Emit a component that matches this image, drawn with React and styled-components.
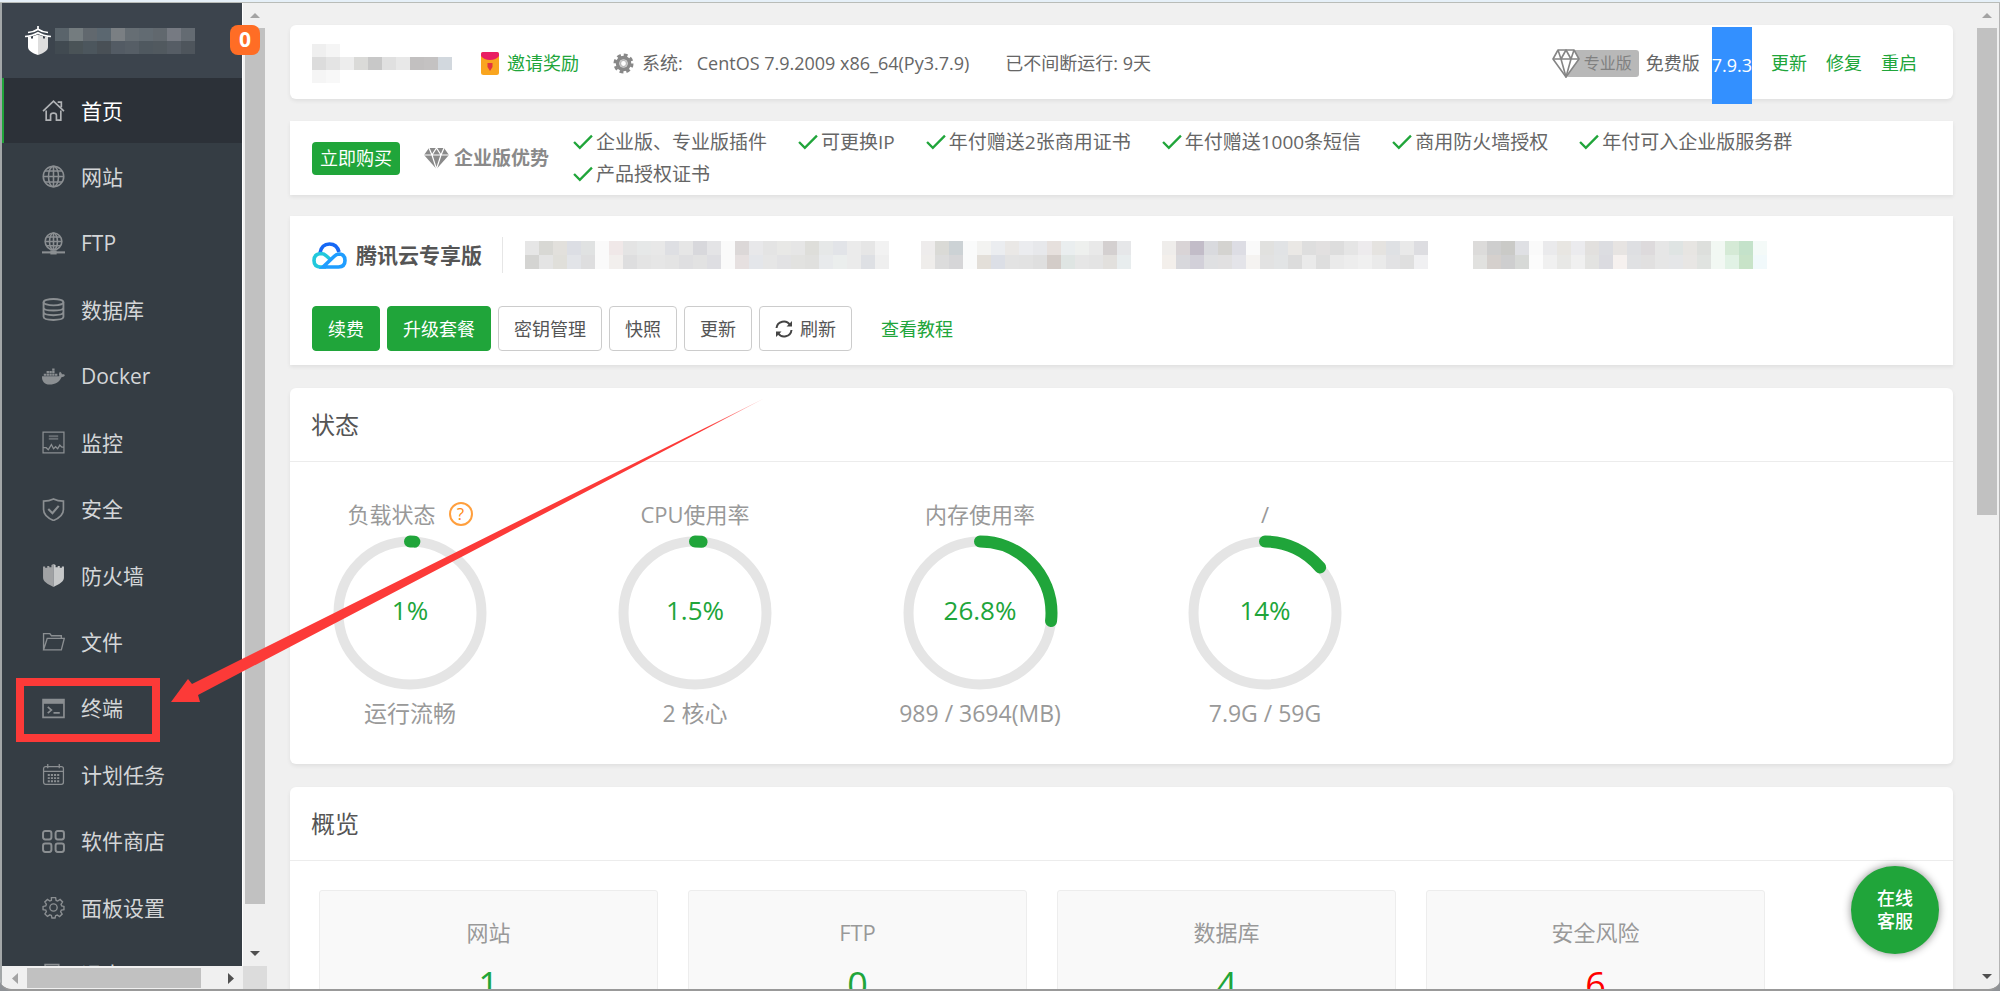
import React from 'react'
import styled, { createGlobalStyle, css } from 'styled-components'
import { FaDocker } from 'react-icons/fa'

const GlobalStyle = createGlobalStyle`
* { box-sizing: border-box; }
body {
  margin: 0;
  background: #8f9296;
  color: #666;
  font-family: "Open Sans", "Noto Sans CJK SC", sans-serif;
  font-size: 18px;
  line-height: 24px;
}
ul { list-style: none; margin: 0; padding: 0; }
h2, p { margin: 0; font-weight: normal; }
a { text-decoration: none; color: #20a53a; }
button { font-family: inherit; }
svg { display: block; flex: none; }
`

const Window = styled.div`
display: flex;
flex-direction: column;
position: relative;
height: 100vh;
overflow: hidden;
background: #f0f0f0;
border-radius: 0 0 12px 12px;
border-bottom: 2px solid #999;
`

const TopEdge = styled.div`
flex: none;
height: 3px;
background: #e6f0f8;
border-bottom: 1px solid #b9bcb8;
`

const Body = styled.div`
display: flex;
flex: 1;
min-height: 0;
border-left: 2px solid #a3a7a8;
border-right: 1px solid #b4b4b4;
`

const SidePane = styled.aside`
flex: none;
display: grid;
grid-template-columns: 241px 24px;
grid-template-rows: minmax(0, 1fr) 23px;
`

const Sidebar = styled.div`
display: flex;
flex-direction: column;
min-height: 0;
background: #353d44;
border-right: 1px solid #fff;
`

const SideHead = styled.div`
display: flex;
align-items: center;
position: relative;
flex: none;
height: 75px;
padding: 0 0 0 23px;
background: #3c444d;
`

const Badge = styled.span`
position: absolute;
top: 22px;
right: -18px;
width: 30px;
height: 30px;
border-radius: 8px;
background: #ff6d25;
color: #fff;
font-size: 21px;
font-weight: bold;
line-height: 28px;
text-align: center;
z-index: 2;
`

const Nav = styled.nav`
flex: 1;
min-height: 0;
overflow: hidden;
`

const Menu = styled.ul`
display: grid;
grid-auto-rows: 1fr;
height: 930px;
`

const MenuLink = styled.a`
display: flex;
align-items: center;
gap: 16px;
height: 65px;
padding-left: 38px;
border-left: 2px solid transparent;
color: #d4d6d8;
font-size: 21px;
line-height: 30px;

svg { width: 23px; height: 23px; color: #8b8f92; }

${p => p.$active && css`
  background: #2c3138;
  border-left-color: #20a53a;
  color: #fff;
  svg { color: #b0b2b5; }
`}
`

const Corner = styled.div`
background: #dcdcdc;
`

const Bar = styled.div`
display: flex;
flex: none;
flex-direction: ${p => (p.$row ? 'row' : 'column')};
${p => (p.$row ? 'height: 23px; padding: 2px 0 1px;' : 'width: 24px; padding: 0 2px;')}
background: #f0f0f0;
`

const BarEnd = styled.div`
display: flex;
align-items: center;
justify-content: center;
flex: none;
${p => (p.$row ? 'width: 25px;' : 'height: 25px;')}
`

const Track = styled.div`
flex: 1;
min-height: 0;
`

const Thumb = styled.div`
background: #c1c1c1;
${p => (p.$row ? `height: 100%; width: ${p.$size}%;` : `width: 100%; height: ${p.$size}%;`)}
`

const Main = styled.main`
flex: 1;
min-width: 0;
overflow: hidden;
padding: 22px 22px 0 23px;
`

const Card = styled.section`
background: #fff;
border-radius: ${p => (p.$square ? '0' : '6px')};
box-shadow: 0 2px 4px rgba(0, 0, 0, .07);
`

const InfoCard = styled(Card)`
display: flex;
align-items: center;
height: 74px;
padding: 2px 36px 0 22px;
margin-bottom: 22px;
white-space: nowrap;
`

const Invite = styled.a`
display: flex;
align-items: center;
gap: 8px;
margin-left: 29px;
`

const System = styled.div`
display: flex;
align-items: center;
gap: 8px;
margin: 0 36px 0 34px;
`

const SystemName = styled.span`
margin-left: 6px;
`

const Version = styled.div`
display: flex;
align-items: center;
margin-left: auto;

> svg { position: relative; z-index: 1; }
`

const ProTag = styled.span`
height: 27px;
margin-left: -14px;
padding: 0 7px 0 18px;
border-radius: 3px;
background: #b8b8b8;
color: #808080;
font-size: 16px;
line-height: 26px;
`

const Plan = styled.span`
margin: 0 12px 0 7px;
`

const Selected = styled.span`
height: 77px;
margin-bottom: -5px;
background: #3390ff;
color: #fff;
line-height: 77px;
`

const VersionLink = styled.a`
margin-left: 19px;
`

const PlanCard = styled(Card)`
display: flex;
align-items: center;
min-height: 74px;
padding: 0 22px;
margin-bottom: 21px;
`

const BuyButton = styled.button`
flex: none;
height: 33px;
padding: 0 8px;
border: 0;
border-radius: 4px;
background: #20a53a;
color: #fff;
font-size: 18px;
line-height: 30px;
`

const Brand = styled.div`
display: flex;
align-items: center;
flex: none;
gap: 5px;
margin: 0 24px;
color: #8a8a8a;
font-size: 19px;
font-weight: bold;
`

const Perks = styled.ul`
display: flex;
flex-wrap: wrap;
column-gap: 31px;
`

const Perk = styled.li`
display: flex;
align-items: center;
gap: 3px;
height: 32px;
font-size: 19px;
`

const CloudCard = styled(Card)`
height: 149px;
padding: 21px 22px 0;
margin-bottom: 23px;
`

const CloudRow = styled.div`
display: flex;
align-items: center;
height: 36px;
`

const CloudName = styled.strong`
margin-left: 9px;
padding-right: 20px;
border-right: 1px solid #e6e6e6;
color: #555;
font-size: 21px;
line-height: 36px;
`

const ButtonRow = styled.div`
display: flex;
align-items: center;
gap: 7px;
margin-top: 33px;
`

const CloudButton = styled.button`
display: flex;
align-items: center;
gap: 7px;
height: 45px;
padding: 0 15px;
border: 1px solid ${p => (p.$primary ? '#20a53a' : '#ccc')};
border-radius: 4px;
background: ${p => (p.$primary ? '#20a53a' : '#fff')};
color: ${p => (p.$primary ? '#fff' : '#555')};
font-size: 18px;
line-height: 24px;
`

const Guide = styled.a`
margin-left: 22px;
`

const Panel = styled(Card)`
margin-bottom: 23px;
`

const PanelTitle = styled.h2`
height: 74px;
padding-left: 21px;
border-bottom: 1px solid #ececec;
color: #555;
font-size: 24px;
line-height: 73px;
`

const Gauges = styled.div`
display: flex;
gap: 45px;
padding: 37px 0 36px;
`

const GaugeBox = styled.div`
display: flex;
flex-direction: column;
align-items: center;
width: 240px;
color: #999;
font-size: 22px;
line-height: 30px;
`

const GaugeLabel = styled.div`
display: flex;
align-items: center;
gap: 13px;
`

const Help = styled.button`
width: 24px;
height: 24px;
padding: 0;
border: 2px solid #ff9f3d;
border-radius: 50%;
background: none;
color: #ff8a15;
font-size: 17px;
line-height: 20px;
`

const Dial = styled.div`
display: grid;
place-items: center;
margin: 4px 0 5px;

> * { grid-area: 1 / 1; }
`

const DialValue = styled.span`
color: #20a53a;
font-size: 26px;
line-height: 36px;
padding-bottom: 6px;
`

const GaugeNote = styled.p`
font-size: 23px;
`

const Tiles = styled.div`
display: grid;
grid-template-columns: repeat(4, minmax(0, 339px));
gap: 30px;
padding: 29px;
`

const Tile = styled.div`
height: 150px;
padding-top: 26px;
border: 1px solid #ededed;
border-radius: 3px;
background: #f9f9f9;
color: #999;
font-size: 22px;
line-height: 30px;
text-align: center;
`

const TileCount = styled.a`
display: block;
margin-top: 14px;
color: ${p => (p.$alert ? 'red' : '#20a53a')};
font-size: 36px;
line-height: 48px;
`

const ServiceButton = styled.button`
position: absolute;
right: 61px;
bottom: 35px;
width: 88px;
height: 88px;
padding: 0 24px;
border: 0;
border-radius: 50%;
background: #20a53a;
box-shadow: 0 0 8px rgba(0, 0, 0, .45);
color: #fff;
font-size: 18px;
font-weight: 500;
line-height: 23px;
`

const Highlight = styled.div`
position: absolute;
left: 16px;
top: 678px;
width: 144px;
height: 64px;
border: 8px solid #fc3a38;
pointer-events: none;
`

const Arrow = styled.svg`
position: absolute;
left: 0;
top: 0;
pointer-events: none;
`

const MosaicGrid = styled.div`
display: grid;
grid-template-columns: repeat(${p => p.$cols}, ${p => p.$w}px);
grid-auto-rows: ${p => p.$h}px;
margin-left: ${p => p.$left || 0}px;
`

const Pixel = styled.i`
background: ${p => p.$color};
`

// rows: strings of space separated hex colours
const Mosaic = ({ rows, w, h, left }) => (
  <MosaicGrid $cols={rows[0].split(' ').length} $w={w} $h={h} $left={left} aria-hidden="true">
    {rows.join(' ').split(' ').map((c, i) => <Pixel key={i} $color={c === '-' ? 'transparent' : '#' + c} />)}
  </MosaicGrid>
)

const Line = ({ children, w = 1.5 }) => (
  <svg viewBox="0 0 22 22" fill="none" stroke="currentColor" strokeWidth={w}>{children}</svg>
)

const TowerLogo = () => (
  <svg width="26" height="29" viewBox="0 0 26 29">
    <path d="M13 0v4M3 6.500Q9 6 13 3.200Q17 6 23 6.500M0 10.500Q8 10 13 6.800Q18 10 26 10.500" fill="none" stroke="#fff" strokeWidth="1.700" />
    <path d="M3 11l3-.4v2h2v-2.400l3-1 2-.8V29C7 27 3 24.500 3 21z" fill="#fff" />
    <path d="M23 11l-3-.4v2h-2v-2.400l-3-1-2-.8V29c6-2 10-4.500 10-8z" fill="#ddd" />
  </svg>
)

const HomeIcon = () => (
  <Line w={1.6}>
    <path d="M1 11.500L11 2l10 9.500M15 3h3.500v5M4 11v9.200h4.200v-4.700q0-2 2.800-2t2.800 2v4.700H18V11" />
  </Line>
)
const GlobeIcon = () => (
  <Line>
    <circle cx="11" cy="11" r="9.800" />
    <ellipse cx="11" cy="11" rx="4.800" ry="9.800" />
    <path d="M11 1v20M1 11h20M3 5.800h16M3 16.200h16" />
  </Line>
)
const FtpIcon = () => (
  <Line>
    <circle cx="11" cy="9" r="8" />
    <ellipse cx="11" cy="9" rx="3.800" ry="8" />
    <path d="M11 1v16M3 9h16M4.500 4.800h13M4.500 13.200h13" />
    <path d="M0 19.500h22" strokeWidth="2" />
    <path d="M8 19.500h6" strokeWidth="4" />
  </Line>
)
const DatabaseIcon = () => (
  <Line w={1.8}>
    <ellipse cx="11" cy="4" rx="9.500" ry="3" />
    <path d="M1.500 4v14c0 4 19 4 19 0V4M1.500 9c0 4 19 4 19 0M1.500 13.500c0 4 19 4 19 0" />
  </Line>
)
const MonitorIcon = () => (
  <Line w={1.2}>
    <path d="M1 1h20v20H1z" />
    <path d="M6.500 5h9M6.500 7.500h9" strokeWidth="1.800" opacity=".6" />
    <path d="M1 16h3l2 2 3-5 2 4 2-2 2 2 2-3.500 2 2h2" />
  </Line>
)
const SafeIcon = () => (
  <Line w={1.6}>
    <path d="M11 1Q15 3 20.500 3v8q0 6.500-9.500 10.500Q1.500 17.500 1.500 11V3Q7 3 11 1z" />
    <path d="M6 10.500l4 4 6-7" strokeWidth="2" />
  </Line>
)
const WallIcon = () => (
  <svg viewBox="0 0 22 22">
    <path d="M1 2.500h2v1h2V2h2v1h2V1L11 0v22C5 19 1 17 1 13z" fill="#a0a2a4" />
    <path d="M21 2.500h-2v1h-2V2h-2v1h-2V1L11 0v22c6-3 10-5 10-9z" fill="#c6c8c9" />
  </svg>
)
const FolderIcon = () => (
  <Line w={1.300}>
    <path d="M1.500 19V3.500h6l1.500 2h9.500V8M1.500 19L5 8h16.300l-2.800 11z" />
  </Line>
)
const TerminalIcon = () => (
  <Line w={1.600}>
    <path d="M1 2.500h20v17H1z" />
    <path d="M1 4.500h20" strokeWidth="4" />
    <path d="M5.500 9.500l3.500 3-3.500 3M11 15.200h6" />
  </Line>
)
const CalendarIcon = () => (
  <Line w={1.200}>
    <rect x="1.500" y="3.500" width="19" height="17" rx="2" />
    <path d="M1.500 8h19M5.500 1v4M16.500 1v4" />
    <path d="M5.500 11.500h11M5.500 14.500h11M5.500 17.500h11" strokeWidth="1.800" strokeDasharray="2 1" />
  </Line>
)
const StoreIcon = () => (
  <Line w={1.900}>
    <rect x="1" y="1" width="8" height="8" rx="2" />
    <rect x="13" y="1" width="8" height="8" rx="2" />
    <rect x="1" y="13" width="8" height="8" rx="2" />
    <rect x="13" y="13" width="8" height="8" rx="2" />
  </Line>
)
const SettingIcon = () => (
  <Line w={1.300}>
    <circle cx="11" cy="11" r="3.500" />
    <path d="M9 1.500h4l.5 2.700 1.500.6 2.300-1.500 2.400 2.400L18.200 8l.6 1.500 2.200.5v3l-2.500.5-.7 1.500 1.500 2.300-2.500 2.400-2.300-1.500-1.500.6L12.500 21h-3L9 18.600l-1.500-.6-2.300 1.500-2.400-2.400L4.200 15l-.6-1.500L1 13v-3l2.600-.6.6-1.400-1.500-2.300 2.500-2.400L7.500 4.800 9 4.200z" />
  </Line>
)
const ExitIcon = () => (
  <Line w={1.600}>
    <path d="M16 6V1.500H3v19h13V16M9 11h12M17 7l4 4-4 4" />
  </Line>
)

const DiamondIcon = () => (
  <svg width="28" height="29" viewBox="0 0 28 29" fill="#fff" stroke="#858585" strokeWidth="1.600" strokeLinejoin="round">
    <path d="M6 1h16l5 9-13 18L1 10z" />
    <path d="M1 10h26M6 1l3 9 5 18 5-18 3-9M9 10l5-9 5 9" fill="none" />
  </svg>
)

const SolidDiamond = () => (
  <svg width="25" height="21" viewBox="0 0 25 21">
    <path d="M5 0h15l5 7-12.500 14L0 7z" fill="#8a8a8a" />
    <path d="M0 7h25M5 0l3 7 4.500 14L17 7l3-7M8 7l4.500-7L17 7" fill="none" stroke="#fff" strokeWidth="1.200" />
  </svg>
)

const Envelope = () => (
  <svg width="18" height="23" viewBox="0 0 18 23">
    <rect width="18" height="23" rx="2.500" fill="#f9a51f" />
    <path d="M0 4V2q0-2 2-2h14q2 0 2 2v2Q15 8 9 8T0 4z" fill="#e91e63" />
    <path d="M6.500 11h5v4L9 19l-2.500-4z" fill="#e2343f" />
  </svg>
)

const GearIcon = () => (
  <svg width="21" height="21" viewBox="0 0 22 22" fill="none" stroke="#888">
    <circle cx="11" cy="11" r="9" strokeWidth="3" strokeDasharray="4 3.070" />
    <circle cx="11" cy="11" r="6.200" strokeWidth="3.800" />
    <circle cx="11" cy="11" r="3.200" strokeWidth="1.400" stroke="#bbb" />
  </svg>
)

const Check = () => (
  <svg width="20" height="17" viewBox="0 0 19 16" fill="none" stroke="#20a53a" strokeWidth="2.200">
    <path d="M1 7.500L6.500 13 18 1.500" />
  </svg>
)

const CloudLogo = () => (
  <svg width="35" height="27" viewBox="0 0 35 27" fill="none" strokeWidth="3.600">
    <path d="M8 11Q9.500 2 17.500 2q7.500 0 9.500 8" stroke="#1668f5" />
    <path d="M19 18l-4.500-4Q12 11.500 9 11.500q-7 .5-7 7t7 6.500h5" stroke="#22c8dc" />
    <path d="M11 25L22 14.500q2.500-2.500 5-2.500 6 .3 6 6.500T26.500 25z" stroke="#1f9dff" />
  </svg>
)

const RefreshIcon = () => (
  <svg width="18" height="18" viewBox="0 0 18 18" fill="none" stroke="#444" strokeWidth="2">
    <path d="M1.500 8A7.300 7.300 0 0 1 15 5M16.500 10A7.300 7.300 0 0 1 3 13" />
    <path d="M17 1v5.500h-5.500zM1 17v-5.500h5.500z" fill="#444" stroke="none" />
  </svg>
)

const Scrollbar = ({ row, size }) => (
  <Bar $row={row} aria-hidden="true">
    <BarEnd $row={row}>
      {row
        ? <svg width="6" height="11"><polygon points="6,0 6,11 0,5.500" fill="#a3a3a3" /></svg>
        : <svg width="10" height="7"><polygon points="0,6 5,1 10,6" fill="#a3a3a3" /></svg>}
    </BarEnd>
    <Track><Thumb $row={row} $size={size} /></Track>
    <BarEnd $row={row}>
      {row
        ? <svg width="6" height="11"><polygon points="0,0 0,11 6,5.500" fill="#505050" /></svg>
        : <svg width="10" height="7"><polygon points="0,1 10,1 5,6" fill="#505050" /></svg>}
    </BarEnd>
  </Bar>
)

const menu = [
  ['首页', HomeIcon],
  ['网站', GlobeIcon],
  ['FTP', FtpIcon],
  ['数据库', DatabaseIcon],
  ['Docker', FaDocker],
  ['监控', MonitorIcon],
  ['安全', SafeIcon],
  ['防火墙', WallIcon],
  ['文件', FolderIcon],
  ['终端', TerminalIcon],
  ['计划任务', CalendarIcon],
  ['软件商店', StoreIcon],
  ['面板设置', SettingIcon],
  ['退出', ExitIcon],
]

const perks = [
  '企业版、专业版插件',
  '可更换IP',
  '年付赠送2张商用证书',
  '年付赠送1000条短信',
  '商用防火墙授权',
  '年付可入企业版服务群',
  '产品授权证书',
]

const gauges = [
  { label: '负载状态', value: 1, note: '运行流畅', help: true },
  { label: 'CPU使用率', value: 1.5, note: '2 核心' },
  { label: '内存使用率', value: 26.8, note: '989 / 3694(MB)' },
  { label: '/', value: 14, note: '7.9G / 59G' },
]

const tiles = [['网站', 1], ['FTP', 0], ['数据库', 4], ['安全风险', 6]]

const Gauge = ({ label, value, note, help }) => (
  <GaugeBox>
    <GaugeLabel>
      {label}
      {help && <Help aria-label="帮助">?</Help>}
    </GaugeLabel>
    <Dial>
      <svg width="160" height="160" viewBox="0 0 160 160" fill="none">
        <circle cx="80" cy="80" r="71.500" stroke="#e5e5e5" strokeWidth="10" />
        <circle cx="80" cy="80" r="71.500" stroke="#20a53a" strokeWidth="12" strokeLinecap="round"
          pathLength="100" strokeDasharray={`${value} 100`} transform="rotate(-90 80 80)" />
      </svg>
      <DialValue>{value}%</DialValue>
    </Dial>
    <GaugeNote>{note}</GaugeNote>
  </GaugeBox>
)

const App = () => (
  <Window>
    <GlobalStyle />
    <TopEdge />
    <Body>
      <SidePane>
        <Sidebar>
          <SideHead>
            <TowerLogo />
            <Mosaic w={14} h={13} left={4} rows={[
              '5a646b 747c7f 61686e 5b6770 7a7f83 666e74 626b72 61686e 767a82 646b72',
              '414a51 4a5357 4c565d 495056 535b64 565e66 4f585f 51595f 565d65 4e555c',
            ]} />
            <Badge>0</Badge>
          </SideHead>
          <Nav>
            <Menu>
              {menu.map(([name, Icon], i) => (
                <li key={name}><MenuLink href="#" $active={i === 0}><Icon />{name}</MenuLink></li>
              ))}
            </Menu>
          </Nav>
        </Sidebar>
        <Scrollbar size={96} />
        <Scrollbar row size={91} />
        <Corner />
      </SidePane>

      <Main>
        <InfoCard>
          <Mosaic w={14} h={13} rows={[
            'efefef f5f5f5 - - - - - - - -',
            'dcdcdc e4e4e4 ededed dadad8 c8c8c8 e0e0e0 e8e8e8 c2c0c0 c4c2c2 d2d8de',
            'f5f5f5 f8f8f8 - - - - - - - -',
          ]} />
          <Invite href="#"><Envelope />邀请奖励</Invite>
          <System><GearIcon />系统: <SystemName>CentOS 7.9.2009 x86_64(Py3.7.9)</SystemName></System>
          <span>已不间断运行: 9天</span>
          <Version>
            <DiamondIcon />
            <ProTag>专业版</ProTag>
            <Plan>免费版</Plan>
            <Selected>7.9.3</Selected>
            <VersionLink href="#">更新</VersionLink>
            <VersionLink href="#">修复</VersionLink>
            <VersionLink href="#">重启</VersionLink>
          </Version>
        </InfoCard>

        <PlanCard $square>
          <BuyButton>立即购买</BuyButton>
          <Brand><SolidDiamond />企业版优势</Brand>
          <Perks>
            {perks.map(text => <Perk key={text}><Check />{text}</Perk>)}
          </Perks>
        </PlanCard>

        <CloudCard $square>
          <CloudRow>
            <CloudLogo />
            <CloudName>腾讯云专享版</CloudName>
            <Mosaic w={14} h={14} left={22} rows={[
              'e6e6e6 d8d8d4 e2e0dc dcdee4 e0e2e2 fafafa f0e8e8 e4e4e4 e6e8e8 e8e8e8 dedfe3 e6e6e6 d8d8dc e4e4e6 fafafa dcd8d8 e8e8ea e4e4e4 e8e8e6 e6e6e6 dededa e6e8e8 e2e4e8 ebebeb e6e6e6 f2f2f2',
              'd4d4d2 e4e4e4 e0dfda e2e4e8 dededf fafafa f2efed dededf e4e4e4 e6e6e6 e4e4e4 dfdfe1 e2e2e2 dedee2 fafafa e6e0e0 e4e6ea e6e6e6 e2e2e4 e2e2e0 e0e0de e8eaec ebeeed ebebeb dee0e4 efefef',
            ]} />
            <Mosaic w={14} h={14} left={32} rows={[
              'eeecec dadad6 ccd2d5 fafbfb f3f3f1 ebedf0 eae8e6 ebecef e7e8eb e6e0dd eaeeef eef0ee e9e9e9 d4d0d0 e6e7e9',
              'efedeb dcdcdc d6d6d8 fafbfb e3dfd9 dcdfe6 e3e3e3 e2e2e2 dfdfdf d3ccc8 dfe5e3 e6e6e6 e4e4e4 e2e0dd e8edee',
            ]} />
            <Mosaic w={14} h={14} left={31} rows={[
              'efedeb d9d4d6 c2bcc8 d9dade d4d3d0 dddde4 fafafa e1e1df e1e3e5 eae8e5 dedede e2e0e0 dddddd e5e5e5 edebed e5e3e0 dfe1e4 e9e9e9 dddde1',
              'f3efeb d8d8dc d2d0d9 dfe0e2 e1e0e1 e4e4e9 f5f3f1 e2e2e2 e2e4e5 dcdcdc eaeaea dedede eaeaea ededed f0f0f0 eaeaea e2e2e4 dfdfdf f0f0f2',
            ]} />
            <Mosaic w={14} h={14} left={45} rows={[
              'dcdbda cecece cacac7 dfe0e4 fafafa eaeaec e8e6e2 ebebee e2e0de dcdde1 e7e4e2 dedfe2 dddadc e6e6e6 dfe4e3 e7e5e2 dddfdc f2f8f3 d5ead6 c4e2ca f4faf8',
              'e1e1df d5d0cd cececf d7d9d7 fcfcfc f0f0f0 e8e8e6 f0f0f0 e3e3e1 dbdbe0 f6f1ef e0e1e3 e1e0e0 e6e6e6 e5e6e8 e8e6e4 e0e3e0 f2f8f3 e1f2e5 c8e3c8 f1f9fb',
            ]} />
          </CloudRow>
          <ButtonRow>
            <CloudButton $primary>续费</CloudButton>
            <CloudButton $primary>升级套餐</CloudButton>
            <CloudButton>密钥管理</CloudButton>
            <CloudButton>快照</CloudButton>
            <CloudButton>更新</CloudButton>
            <CloudButton><RefreshIcon />刷新</CloudButton>
            <Guide href="#">查看教程</Guide>
          </ButtonRow>
        </CloudCard>

        <Panel>
          <PanelTitle>状态</PanelTitle>
          <Gauges>
            {gauges.map(g => <Gauge key={g.label} {...g} />)}
          </Gauges>
        </Panel>

        <Panel>
          <PanelTitle>概览</PanelTitle>
          <Tiles>
            {tiles.map(([name, count]) => (
              <Tile key={name}>
                {name}
                <TileCount href="#" $alert={name === '安全风险'}>{count}</TileCount>
              </Tile>
            ))}
          </Tiles>
        </Panel>
      </Main>
      <Scrollbar size={52} />
    </Body>

    <ServiceButton>在线客服</ServiceButton>
    <Highlight />
    <Arrow width="780" height="720" viewBox="0 0 780 720">
      <defs>
        <linearGradient id="tail" x1="0" x2="1">
          <stop offset=".9" stopColor="#fc3a38" />
          <stop offset="1" stopColor="#fc3a38" stopOpacity=".4" />
        </linearGradient>
      </defs>
      <path d="M171 702L188 679L192 684L765 398L198 695L200 702z" fill="url(#tail)" />
    </Arrow>
  </Window>
)

export default App
